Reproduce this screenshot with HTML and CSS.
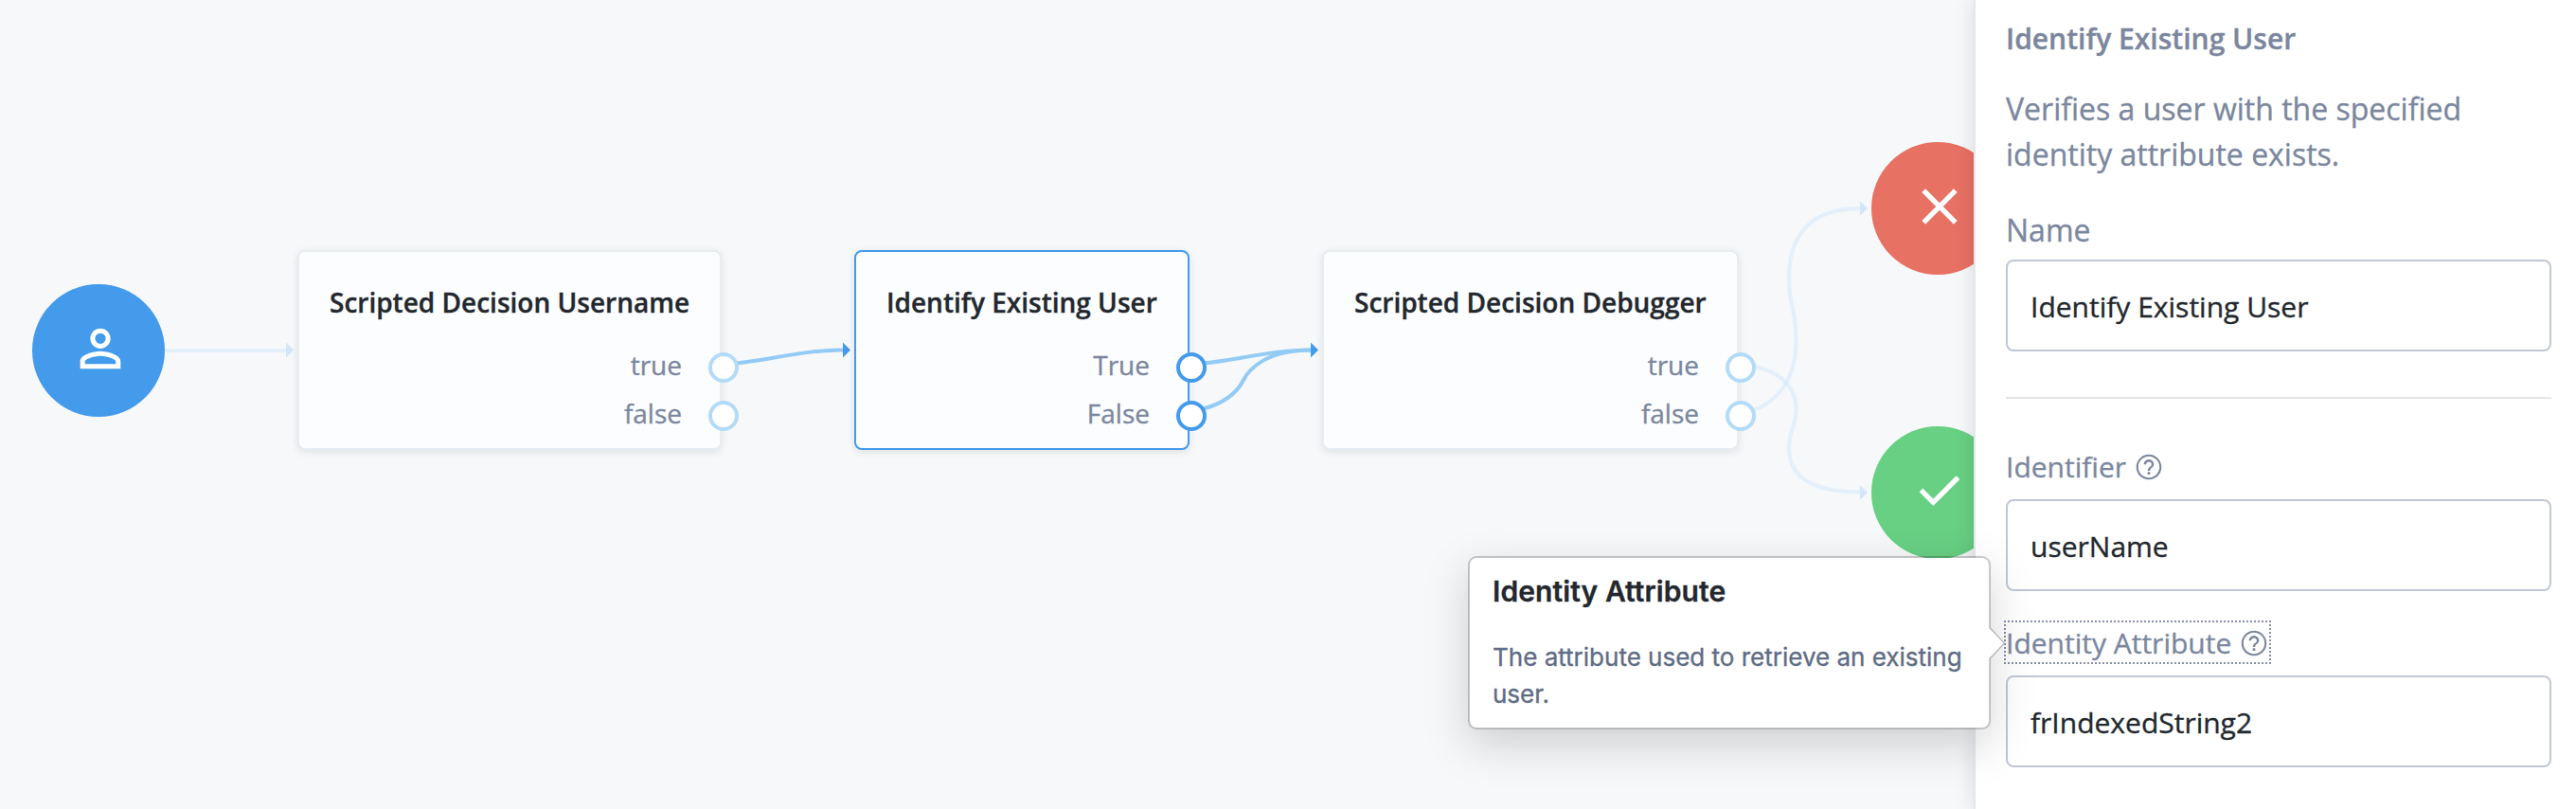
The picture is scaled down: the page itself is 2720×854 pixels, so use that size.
FILE: index.html
```html
<!DOCTYPE html>
<html lang="en">
<head>
<meta charset="utf-8">
<title>Identify Existing User</title>
<link rel="stylesheet" href="styles.css">
</head>
<body>
<div class="editor">
  <main class="canvas">
    <svg class="links" width="2084" height="854" viewBox="0 0 2084 854">
      <g class="link-faint">
        <path d="M160 370H303"/>
        <path d="M1838 385C1875 388 1896.500 405 1896.500 432.500C1896.500 441 1895 445 1893 451C1890.500 458 1889 465 1889 473C1889 507 1920 519.500 1965 519.500"/>
        <path d="M1838 436C1880 430 1896.500 395 1896.500 359C1896.500 345 1895 335 1893 327C1891 318 1889 305 1889 293C1889 240 1920 220 1965 220"/>
      </g>
      <g class="arrow-faint">
        <path d="M302 361.500L310 369.500L302 377.500Z"/>
        <path d="M1964 212.500L1972 220L1964 227.500Z"/>
        <path d="M1964 512.500L1972 520L1964 527.500Z"/>
      </g>
      <g class="link-active">
        <path d="M764 384C800 384 840 369.500 891 369.500"/>
        <path d="M1258 384C1294 384 1334 369.500 1385 369.500"/>
        <path d="M1258 434C1292 429 1307 413 1312.500 402S1335 369.500 1385 369.500"/>
      </g>
      <g class="arrow-active">
        <path d="M890 361.500L898 369.500L890 377.500Z"/>
        <path d="M1384 361.500L1392 369.500L1384 377.500Z"/>
      </g>
    </svg>

    <div class="terminal terminal-start">
      <svg width="64" height="64" viewBox="0 0 24 24"><path fill="#fff" d="M12 5.900a2.100 2.100 0 1 1 0 4.200 2.100 2.100 0 0 1 0-4.200m0 9c2.970 0 6.100 1.460 6.100 2.100v1.100H5.900V17c0-.640 3.130-2.100 6.100-2.100M12 4C9.790 4 8 5.790 8 8s1.790 4 4 4 4-1.790 4-4-1.790-4-4-4zm0 9c-2.670 0-8 1.340-8 4v3h16v-3c0-2.660-5.330-4-8-4z"/></svg>
    </div>

    <section class="node node-username">
      <h3 class="node-title">Scripted Decision Username</h3>
      <ul class="ports">
        <li class="port">true<span class="socket"></span></li>
        <li class="port">false<span class="socket"></span></li>
      </ul>
    </section>

    <section class="node node-identify selected">
      <h3 class="node-title">Identify Existing User</h3>
      <ul class="ports">
        <li class="port">True<span class="socket"></span></li>
        <li class="port">False<span class="socket"></span></li>
      </ul>
    </section>

    <section class="node node-debugger">
      <h3 class="node-title">Scripted Decision Debugger</h3>
      <ul class="ports">
        <li class="port">true<span class="socket"></span></li>
        <li class="port">false<span class="socket"></span></li>
      </ul>
    </section>

    <div class="terminal terminal-failure">
      <svg width="64" height="64" viewBox="0 0 24 24"><path fill="#fff" d="M19 6.410L17.590 5 12 10.590 6.410 5 5 6.410 10.590 12 5 17.590 6.410 19 12 13.410 17.590 19 19 17.590 13.410 12z"/></svg>
    </div>
    <div class="terminal terminal-success">
      <svg width="64" height="64" viewBox="0 0 24 24"><path fill="none" stroke="#fff" stroke-width="2" d="M4.700 11.800L9.500 16.600L19.300 6.800"/></svg>
    </div>
  </main>

  <aside class="panel">
    <h2 class="panel-title">Identify Existing User</h2>
    <p class="panel-text">Verifies a user with the specified identity attribute exists.</p>
    <label class="name-label" for="name">Name</label>
    <input class="field" id="name" type="text" value="Identify Existing User">
    <hr class="divider">
    <div class="help-label">Identifier
      <svg class="help-icon" width="32" height="32" viewBox="0 0 24 24"><path fill="currentColor" d="M11 18h2v-2h-2v2zm1-16C6.480 2 2 6.480 2 12s4.480 10 10 10 10-4.480 10-10S17.520 2 12 2zm0 18.400c-4.630 0-8.400-3.770-8.400-8.400S7.370 3.600 12 3.600s8.400 3.770 8.400 8.400-3.770 8.400-8.400 8.400zM12 6c-2.210 0-4 1.790-4 4h1.800c0-1.210.990-2.200 2.200-2.200s2.200.990 2.200 2.200c0 2-3.100 1.750-3.100 5h1.800c0-2.250 3.100-2.500 3.100-5 0-2.210-1.790-4-4-4z"/></svg>
    </div>
    <input class="field" type="text" value="userName" aria-label="Identifier">
    <div class="help-label focused">Identity Attribute
      <svg class="help-icon" width="32" height="32" viewBox="0 0 24 24"><path fill="currentColor" d="M11 18h2v-2h-2v2zm1-16C6.480 2 2 6.480 2 12s4.480 10 10 10 10-4.480 10-10S17.520 2 12 2zm0 18.400c-4.630 0-8.400-3.770-8.400-8.400S7.370 3.600 12 3.600s8.400 3.770 8.400 8.400-3.770 8.400-8.400 8.400zM12 6c-2.210 0-4 1.790-4 4h1.800c0-1.210.990-2.200 2.200-2.200s2.200.990 2.200 2.200c0 2-3.100 1.750-3.100 5h1.800c0-2.250 3.100-2.500 3.100-5 0-2.210-1.790-4-4-4z"/></svg>
    </div>
    <input class="field" type="text" value="frIndexedString2" aria-label="Identity Attribute">
  </aside>

  <div class="popover" role="tooltip">
    <h3 class="popover-title">Identity Attribute</h3>
    <p class="popover-text">The attribute used to retrieve an existing user.</p>
    <svg class="popover-arrow" width="18" height="34" viewBox="0 0 18 34"><path d="M0 1L16 17L0 33" fill="#fff"/><path d="M1.500 1L16.500 17L1.500 33" fill="none" stroke="#b5b5b5" stroke-width="1.200"/></svg>
  </div>
</div>
</body>
</html>
```
FILE: styles.css
```css
* { box-sizing: border-box; }

body {
  margin: 0;
  font-family: "Open Sans", "Noto Sans", sans-serif;
  color: #23282e;
  -webkit-text-stroke: .35px currentColor;
}

h2, h3, p, ul { margin: 0; padding: 0; }

.editor {
  position: relative;
  display: flex;
  width: 2720px;
  height: 854px;
  overflow: hidden;
  background: #f6f8fa;
}

.canvas {
  position: relative;
  flex: 1;
  overflow: hidden;
}

.links { position: absolute; left: 0; top: 0; }
.links path { fill: none; stroke-width: 4; }
.links .link-faint path { stroke: #cfe7fb; stroke-opacity: .5; }
.links .link-active path { stroke: #93cbf5; }
.links .arrow-faint path { fill: #d3e5f8; }
.links .arrow-active path { fill: #449aeb; }

.terminal {
  position: absolute;
  display: flex;
  align-items: center;
  justify-content: center;
  width: 140px;
  height: 140px;
  padding: 0 0 4px 4px;
  border-radius: 50%;
}
.terminal-start { left: 34px; top: 300px; background: #449aeb; }
.terminal-failure { left: 1976px; top: 150px; background: #e77163; }
.terminal-success { left: 1976px; top: 450px; background: #67d083; }

.node {
  position: absolute;
  top: 264px;
  height: 211px;
  padding: 32px;
  border: 2px solid #e7edf3;
  border-radius: 8px;
  background: #fcfdff;
  box-shadow: 0 2px 8px rgba(0, 0, 0, .1);
}
.node-username { left: 314px; width: 448px; }
.node-identify { left: 902px; width: 354px; }
.node-debugger { left: 1396px; width: 440px; }
.node.selected { border-color: #449aeb; }

.node-title {
  font-size: 28px;
  font-weight: 600;
  line-height: 42px;
  white-space: nowrap;
}

.ports {
  margin-top: 20px;
  padding-right: 8px;
  list-style: none;
}
.port {
  position: relative;
  height: 51px;
  font-size: 28px;
  line-height: 51px;
  text-align: right;
  color: #7b879e;
}
.socket {
  position: absolute;
  right: -60px;
  top: 12px;
  width: 32px;
  height: 32px;
  border: 4px solid #b3dbf8;
  border-radius: 50%;
  background: #fff;
}
.selected .socket { border-color: #449aeb; }

.panel {
  position: relative;
  width: 636px;
  padding: 18px 26px 0 32px;
  border-left: 2px solid #e5e7ea;
  background: #fff;
  box-shadow: 0 0 20px rgba(0, 0, 0, .13);
  color: #7b879e;
}
.panel-title {
  font-size: 30px;
  font-weight: 600;
  line-height: 45px;
}
.panel-text {
  margin-top: 28px;
  font-size: 32px;
  line-height: 48px;
}
.name-label {
  display: block;
  margin: 32px 0 7px;
  font-size: 32px;
  line-height: 48px;
}
.field {
  display: block;
  width: 576px;
  height: 97px;
  padding: 1px 24px 0;
  border: 2px solid #c0c8d6;
  border-radius: 8px;
  background: transparent;
  font: 30px "Open Sans", "Noto Sans", sans-serif;
  color: #23282e;
}
.divider {
  height: 2px;
  margin: 48px 0 50px;
  border: 0;
  background: #e6e6e6;
}
.help-label {
  display: flex;
  gap: 8px;
  align-items: center;
  width: max-content;
  height: 42px;
  margin-bottom: 14px;
  font-size: 30px;
  line-height: 43px;
}
.field + .help-label { margin-top: 33px; }
.help-icon { display: block; margin-top: 2px; }
.focused { outline: 2px dotted #8690ab; }

.popover {
  position: absolute;
  left: 1550px;
  top: 587px;
  width: 552px;
  height: 183px;
  padding: 14px 24px;
  border: 2px solid rgba(0, 0, 0, .2);
  border-radius: 9px;
  background: #fff;
  background-clip: padding-box;
  box-shadow: 0 16px 48px rgba(0, 0, 0, .17);
  font-family: Inter, "Liberation Sans", sans-serif;
}
.popover-title {
  font-size: 30px;
  font-weight: 600;
  line-height: 42px;
  letter-spacing: .1px;
}
.popover-text {
  margin-top: 29px;
  font-size: 26px;
  line-height: 39px;
  color: #5f6d85;
}
.popover-arrow {
  position: absolute;
  right: -18px;
  top: 73px;
}
```
